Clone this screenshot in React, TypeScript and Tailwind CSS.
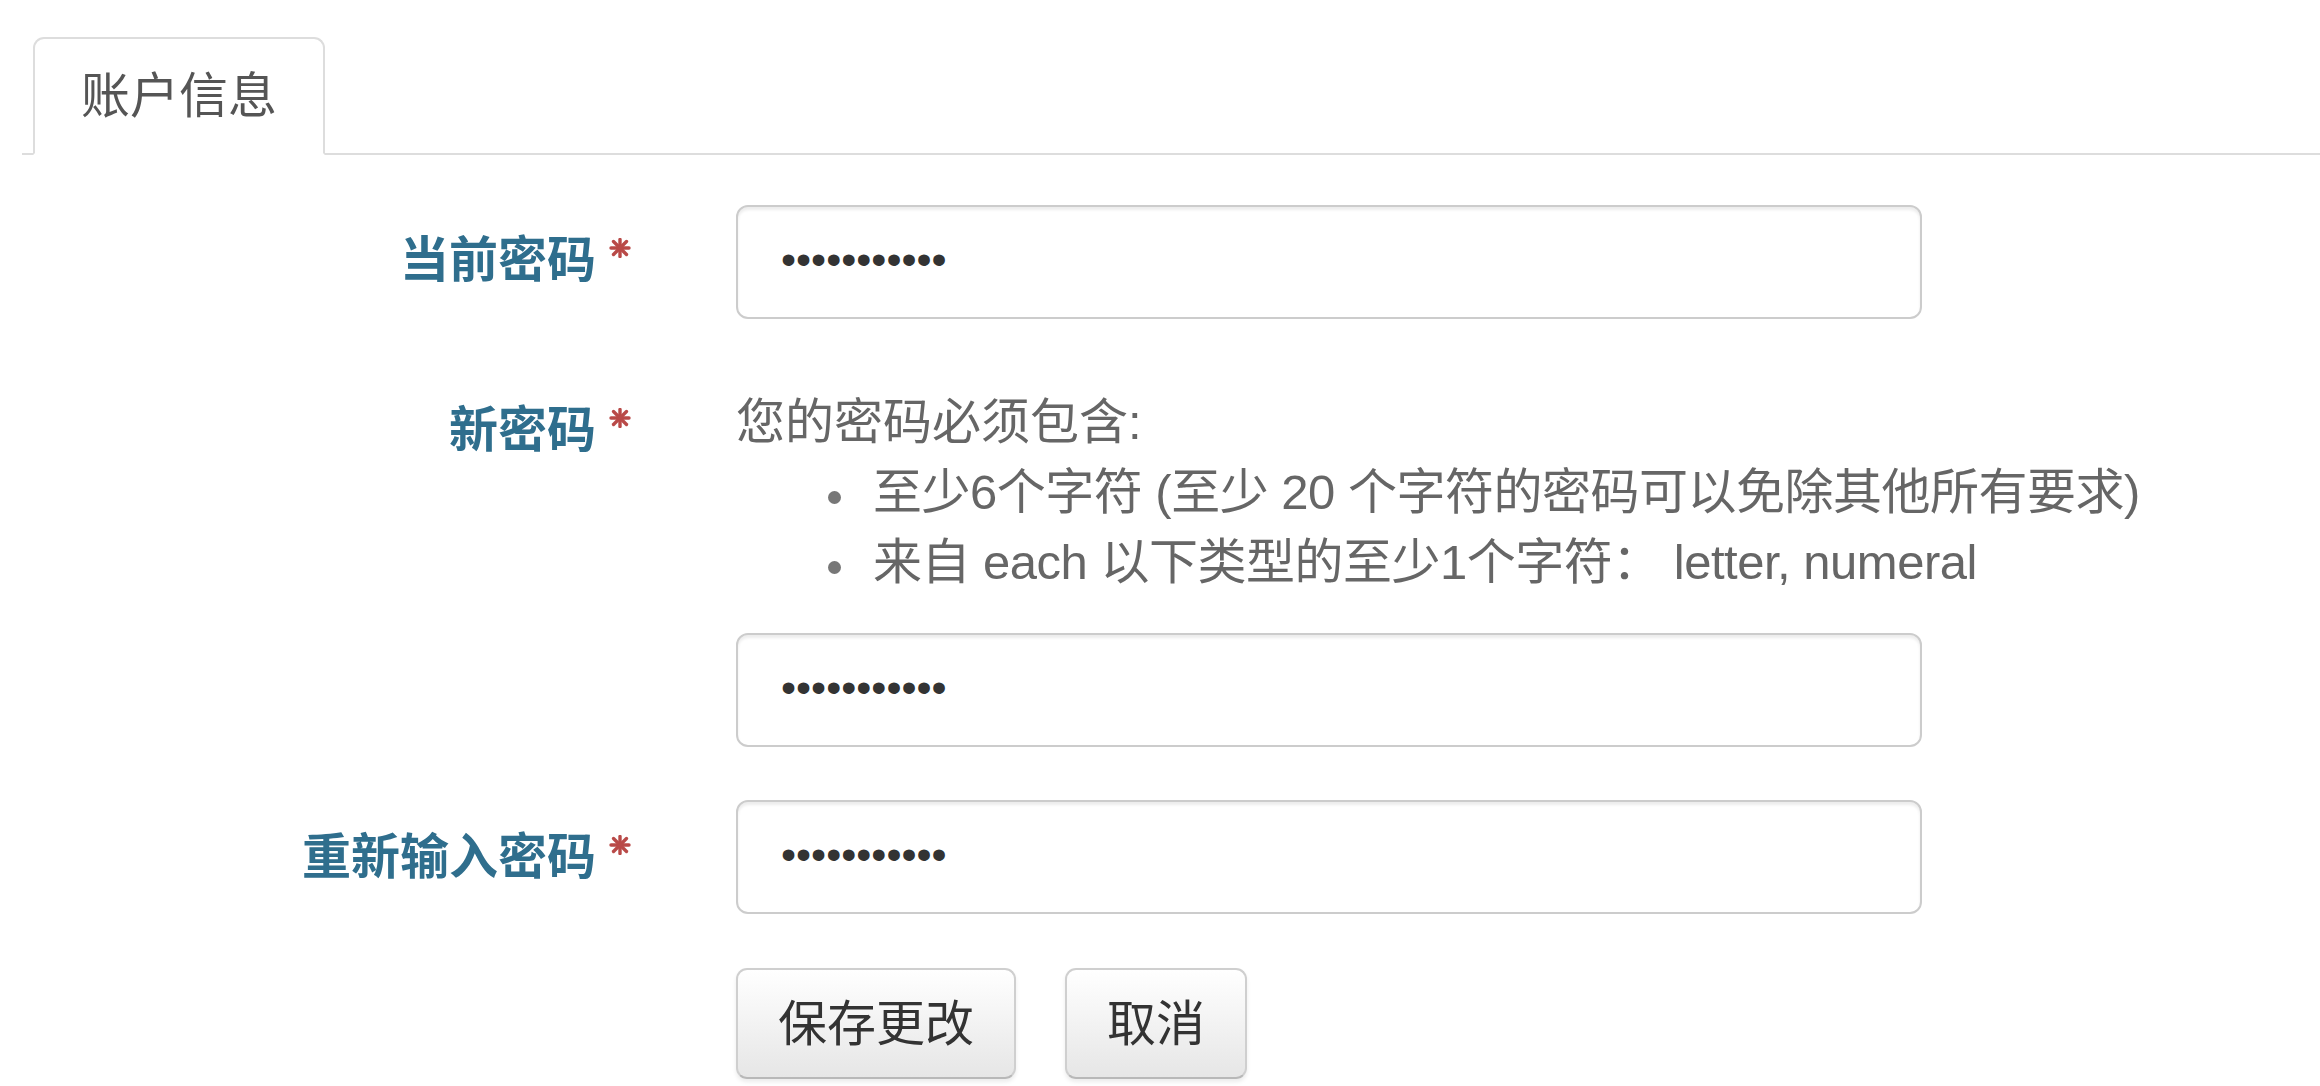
import React from "react";

const font = "font-['Liberation_Sans','Noto_Sans_CJK_SC',sans-serif]";

function Asterisk() {
  return (
    <svg width="24" height="20" viewBox="0 0 24 20" className="shrink-0 ml-[12px] mt-[13px]">
      <g stroke="#b94a48" strokeWidth="3.4" strokeLinecap="round">
        <line x1="12" y1="1.5" x2="12" y2="18.5" />
        <line x1="3" y1="10" x2="21" y2="10" />
        <line x1="5.5" y1="3.5" x2="18.5" y2="16.5" />
        <line x1="18.5" y1="3.5" x2="5.5" y2="16.5" />
      </g>
    </svg>
  );
}

function Label({ text, pt }: { text: string; pt: string }) {
  return (
    <div className={`w-[632px] shrink-0 flex justify-end items-start ${pt}`}>
      <span className="font-bold text-[#2f6e8d] leading-[70px]">{text}</span>
      <Asterisk />
    </div>
  );
}

function Password() {
  return (
    <input
      type="password"
      readOnly
      defaultValue="abcdefghijk"
      className="block w-[1186px] h-[114px] border-2 border-[#cccccc] rounded-[12px] bg-white pl-[43px] pb-[6px] text-[43px] text-[#333] shadow-[inset_0_3px_3px_rgba(0,0,0,0.075)] outline-none"
    />
  );
}

const rules = [
  "至少6个字符 (至少 20 个字符的密码可以免除其他所有要求)",
  "来自 each 以下类型的至少1个字符： letter, numeral",
];

export default function App() {
  return (
    <div className={`min-h-screen bg-white text-[49px] leading-[70px] ${font}`}>
      <div className="pt-[37px] pl-[22px]">
        <ul className="flex border-b-2 border-[#dddddd]">
          <li className="ml-[11px] -mb-[2px] border-2 border-[#dddddd] border-b-white rounded-t-[11px] bg-white px-[46px] py-[22px] text-[#555]">
            账户信息
          </li>
        </ul>
      </div>

      <div className="flex mt-[50px]">
        <Label text="当前密码" pt="pt-[20px]" />
        <div className="ml-[104px]">
          <Password />
        </div>
      </div>

      <div className="flex mt-[68px]">
        <Label text="新密码" pt="pt-[8px]" />
        <div className="ml-[104px]">
          <div className="text-[#666]">您的密码必须包含:</div>
          <ul>
            {rules.map((r) => (
              <li key={r} className="flex text-[#666] whitespace-pre tracking-[-0.5px]">
                <span className="w-[137px] shrink-0 h-[70px] flex items-center justify-end pr-[32px] pt-[10px]">
                  <span className="block w-[13px] h-[13px] rounded-full bg-[#777]" />
                </span>
                <span>{r}</span>
              </li>
            ))}
          </ul>
          <div className="mt-[36px]">
            <Password />
          </div>
        </div>
      </div>

      <div className="flex mt-[53px]">
        <Label text="重新输入密码" pt="pt-[22px]" />
        <div className="ml-[104px]">
          <Password />
        </div>
      </div>

      <div className="flex mt-[54px] pl-[736px] gap-[49px]">
        <button className="border-2 border-[#cfcfcf] border-b-[#b8b8b8] rounded-[11px] bg-gradient-to-b from-white to-[#e6e6e6] px-[40px] pt-[19px] pb-[18px] text-[#333] shadow-[0_3px_4px_rgba(0,0,0,0.08)]">
          保存更改
        </button>
        <button className="border-2 border-[#cfcfcf] border-b-[#b8b8b8] rounded-[11px] bg-gradient-to-b from-white to-[#e6e6e6] px-[40px] pt-[19px] pb-[18px] text-[#333] shadow-[0_3px_4px_rgba(0,0,0,0.08)]">
          取消
        </button>
      </div>
    </div>
  );
}
